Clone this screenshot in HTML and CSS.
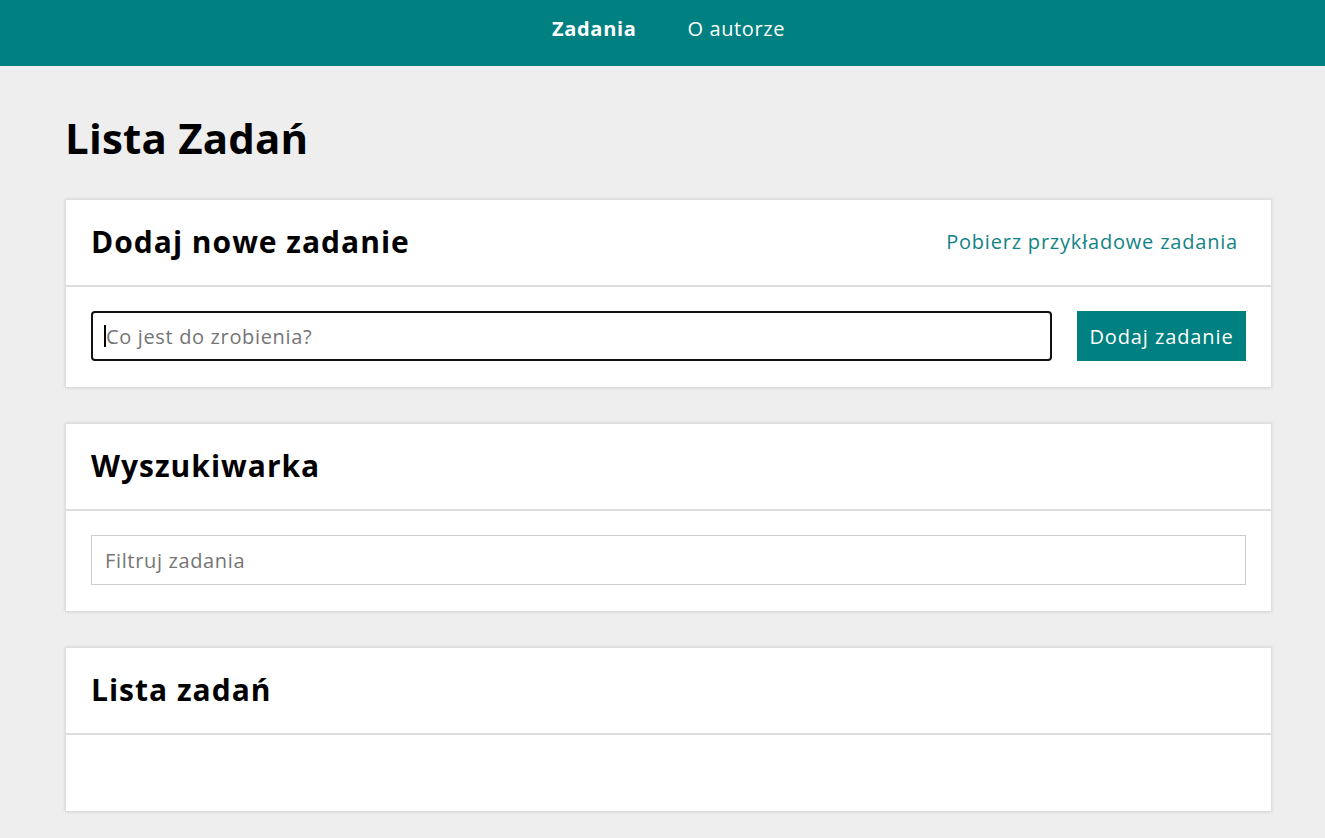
FILE: index.html
```html
<!DOCTYPE html>
<html lang="pl">
<head>
<meta charset="utf-8">
<title>Lista Zadań</title>
<link rel="stylesheet" href="styles.css">
</head>
<body>
<nav class="nav">
  <a class="nav-link active" href="#">Zadania</a>
  <a class="nav-link" href="#">O autorze</a>
</nav>
<main class="container">
  <h1 class="title">Lista Zadań</h1>
  <section class="card">
    <div class="card-header">
      <h2 class="card-title">Dodaj nowe zadanie</h2>
      <a class="card-link" href="#">Pobierz przykładowe zadania</a>
    </div>
    <div class="card-body row">
      <div class="input focused"><span class="caret"></span><span class="placeholder">Co jest do zrobienia?</span></div>
      <button class="btn">Dodaj zadanie</button>
    </div>
  </section>
  <section class="card">
    <div class="card-header">
      <h2 class="card-title">Wyszukiwarka</h2>
    </div>
    <div class="card-body">
      <div class="input"><span class="placeholder">Filtruj zadania</span></div>
    </div>
  </section>
  <section class="card">
    <div class="card-header">
      <h2 class="card-title">Lista zadań</h2>
    </div>
    <div class="card-body empty"></div>
  </section>
</main>
</body>
</html>
```
FILE: styles.css
```css
* { box-sizing: border-box; }
html, body { margin: 0; padding: 0; }
body {
  background: #eeeeee;
  font-family: "Open Sans", "DejaVu Sans", sans-serif;
  color: #000;
}
.nav {
  height: 66px;
  background: #008080;
  display: flex;
  justify-content: center;
  align-items: center;
  gap: 51px;
  padding-left: 12px;
  padding-bottom: 9px;
}
.nav-link {
  color: #fff;
  text-decoration: none;
  font-size: 20px;
  font-weight: 400;
  letter-spacing: 0.6px;
}
.nav-link.active { font-weight: 700; letter-spacing: 0.7px; }
.container {
  padding: 0 53px 0 65px;
}
.title {
  margin: 0;
  padding-top: 43px;
  height: 133px;
  font-size: 42px;
  font-weight: 700;
  line-height: 1.4;
  letter-spacing: 0.2px;
}
.card {
  background: #fff;
  border: 1px solid #dedede;
  box-shadow: 0 0 3px rgba(0,0,0,0.12);
  margin-bottom: 35px;
}
.card-header {
  height: 87px;
  border-bottom: 2px solid #dddddd;
  display: flex;
  align-items: center;
  justify-content: space-between;
  padding: 0 33px 3px 25px;
}
.card-title {
  margin: 0;
  font-size: 30px;
  font-weight: 700;
  letter-spacing: 1px;
}
.card-link {
  color: #138486;
  text-decoration: none;
  font-size: 20px;
  letter-spacing: 0.8px;
}
.card-body {
  padding: 24px 25px 26px;
}
.card-body.row {
  display: flex;
  gap: 25px;
}
.card-body.empty { height: 76px; }
.input {
  flex: 1;
  height: 50px;
  border: 1px solid #cccccc;
  display: flex;
  align-items: center;
  padding: 0 13px;
  font-size: 20px;
  letter-spacing: 0.65px;
}
.input.focused {
  border: 2px solid #111;
  border-radius: 4px;
  padding-left: 11px;
}
.caret {
  width: 2px;
  height: 22px;
  background: #000;
}
.placeholder { color: #757575; }
.btn {
  width: 169px;
  height: 50px;
  border: none;
  background: #008080;
  color: #fff;
  font-family: inherit;
  font-size: 20px;
  letter-spacing: 0.9px;
  padding: 0;
}
```
